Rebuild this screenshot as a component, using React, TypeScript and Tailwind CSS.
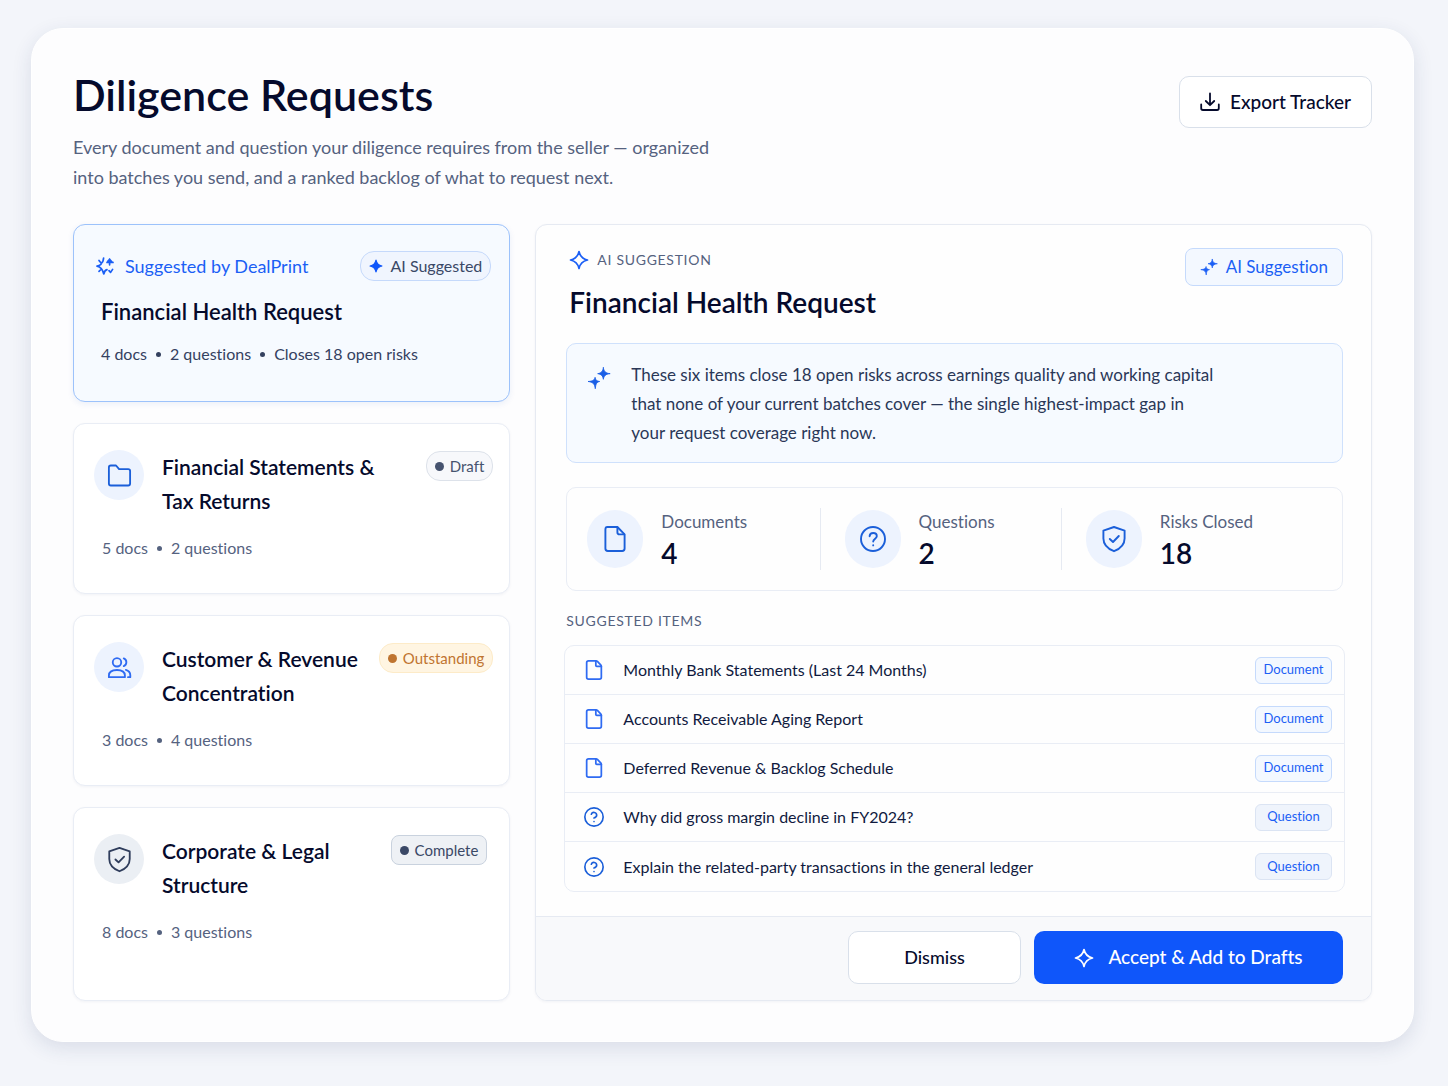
import React, { useState } from 'react';
import { CircleQuestionMark, File } from 'lucide-react';

type BatchStatus = 'draft' | 'outstanding' | 'complete';

interface Batch {
  id: number;
  title: [string, string];
  status: BatchStatus;
  meta: string[];
}

interface SuggestedItem {
  id: number;
  title: string;
  kind: 'Document' | 'Question';
}

interface IconProps {
  className?: string;
}

const batches: Batch[] = [
  { id: 1, title: ['Financial Statements &', 'Tax Returns'], status: 'draft', meta: ['5 docs', '2 questions'] },
  { id: 2, title: ['Customer & Revenue', 'Concentration'], status: 'outstanding', meta: ['3 docs', '4 questions'] },
  { id: 3, title: ['Corporate & Legal', 'Structure'], status: 'complete', meta: ['8 docs', '3 questions'] },
];

const items: SuggestedItem[] = [
  { id: 1, title: 'Monthly Bank Statements (Last 24 Months)', kind: 'Document' },
  { id: 2, title: 'Accounts Receivable Aging Report', kind: 'Document' },
  { id: 3, title: 'Deferred Revenue & Backlog Schedule', kind: 'Document' },
  { id: 4, title: 'Why did gross margin decline in FY2024?', kind: 'Question' },
  { id: 5, title: 'Explain the related-party transactions in the general ledger', kind: 'Question' },
];

const Spark: React.FC<IconProps & { filled?: boolean }> = ({ className, filled }) => (
  <svg viewBox="0 0 20 20" className={className} fill={filled ? 'currentColor' : 'none'} stroke="currentColor" strokeWidth="1.7" strokeLinejoin="round" aria-hidden="true">
    <path d="M10 1.5C11 6.2 13.8 9 18.5 10C13.8 11 11 13.8 10 18.5C9 13.8 6.2 11 1.5 10C6.2 9 9 6.2 10 1.5Z" />
  </svg>
);

const Sparkles: React.FC<IconProps> = ({ className }) => (
  <svg viewBox="0 0 22 22" className={className} fill="currentColor" stroke="currentColor" strokeWidth="0.8" strokeLinejoin="round" aria-hidden="true">
    <path d="M15 1.2C15.3 5 17 6.7 21.2 7C17 7.4 15.4 9 15 12.2C14.7 9 13 7.4 9.8 7C13 6.6 14.7 5 15 1.2Z" />
    <path d="M7.4 10.4C7.6 12.8 9 14 11.6 14.2C9 14.6 8 16.4 7.6 20.8C7.1 16.4 5.4 14.7 1 14.2C5.4 14 7 12.8 7.4 10.4Z" />
  </svg>
);

const SparkBurst: React.FC<IconProps> = ({ className }) => (
  <svg viewBox="0 0 20 20" className={className} fill="none" stroke="currentColor" strokeWidth="1.7" strokeLinecap="round" strokeLinejoin="round" aria-hidden="true">
    <path d="M8.6 2C8.4 5 7.6 6.6 6 7.4M4 4.4L5.2 6M2 10.2C3.4 10 4.8 9.4 6 8.4M2 10.2C5.6 11 7.6 13 8.8 18M4 15.4L5.4 14M8.8 18C9.4 15 10.2 14 12 13.6M14 14.6L15.6 16.4L17.6 13.4" />
    <path d="M14.6 3V8.8M12.6 5.6L14.6 3.2L16.8 5.8M12 6.4H18" />
  </svg>
);

const DownloadTray: React.FC<IconProps> = ({ className }) => (
  <svg viewBox="0 0 20 20" className={className} fill="none" stroke="currentColor" strokeWidth="1.8" strokeLinecap="round" strokeLinejoin="round" aria-hidden="true">
    <path d="M10 1.5V13M5.8 9L10 13.2L14.2 9M1.2 12.5V16.3Q1.2 18 2.9 18H17.1Q18.8 18 18.8 16.3V12.5" />
  </svg>
);

const Folder: React.FC<IconProps> = ({ className }) => (
  <svg viewBox="0 0 28 28" className={className} fill="none" stroke="currentColor" strokeWidth="1.9" strokeLinecap="round" strokeLinejoin="round" aria-hidden="true">
    <path d="M3 5.6Q3 3.6 5 3.6H10.4L13.6 7.4H23Q25 7.4 25 9.4V22.4Q25 24.4 23 24.4H5Q3 24.4 3 22.4Z" />
  </svg>
);

const People: React.FC<IconProps> = ({ className }) => (
  <svg viewBox="0 0 28 28" className={className} fill="none" stroke="currentColor" strokeWidth="1.9" strokeLinecap="round" strokeLinejoin="round" aria-hidden="true">
    <circle cx="11.4" cy="8.6" r="4.4" />
    <path d="M3 24V22.4C3 18.6 6 16.6 11.4 16.6S19.6 18.6 19.6 22.4V24Z" />
    <path d="M18.4 4.6A4.3 4.3 0 0 1 18.4 12.6M20.6 16.4C23.6 17.2 25.2 19.2 25.2 22V24H22.8" />
  </svg>
);

const Shield: React.FC<IconProps> = ({ className }) => (
  <svg viewBox="0 0 28 28" className={className} fill="none" stroke="currentColor" strokeWidth="1.9" strokeLinecap="round" strokeLinejoin="round" aria-hidden="true">
    <path d="M14 2L24.6 5.6V13.4C24.6 20 20.4 23.6 14 26.2C7.6 23.6 3.4 20 3.4 13.4V5.6Z" />
    <path d="M9.8 14L13 17L18.8 11" />
  </svg>
);

const statusStyles = {
  draft: {
    label: 'Draft',
    badge: 'rounded-[14px] border-[#dde2ea] bg-[#f7f8fb] text-[#46536f]',
    dot: 'bg-[#46536f]',
    circle: 'bg-[#edf3fe] text-[#1b5fd9]',
    icon: Folder,
  },
  outstanding: {
    label: 'Outstanding',
    badge: 'rounded-[14px] border-[#fdebc8] bg-[#fff5e2] text-[#bf7430]',
    dot: 'bg-[#bf7430]',
    circle: 'bg-[#edf3fe] text-[#2f6bf2]',
    icon: People,
  },
  complete: {
    label: 'Complete',
    badge: 'mr-1.5 rounded-lg border-[#c9d2de] bg-[#eef1f5] text-[#3a4866]',
    dot: 'bg-[#3a4866]',
    circle: 'bg-[#ebeff4] text-[#2f3d5c]',
    icon: Shield,
  },
};

const Meta: React.FC<{ parts: string[] }> = ({ parts }) => (
  <span className="flex items-center">
    {parts.map((part, index) => (
      <React.Fragment key={part}>
        {index > 0 && <span className="mx-[9px] size-[5px] rounded-full bg-current" />}
        <span>{part}</span>
      </React.Fragment>
    ))}
  </span>
);

const SuggestedCard: React.FC<{ selected: boolean; onSelect: () => void }> = ({ selected, onSelect }) => (
  <button
    type="button"
    aria-pressed={selected}
    onClick={onSelect}
    className="flex flex-col rounded-xl border border-[#9cc2fb] bg-[#f6faff] pt-[26px] pr-[18px] pb-[35px] pl-[21px] text-left shadow-[0_2px_6px_rgba(30,80,180,0.08)]"
  >
    <span className="flex w-full items-center justify-between">
      <span className="flex items-center gap-2.5 text-[18px] text-[#1b5ff5]">
        <SparkBurst className="size-5" />
        Suggested by DealPrint
      </span>
      <span className="flex h-[30px] items-center gap-2 rounded-[14px] border border-[#c5d9fb] bg-[#f0f5fe] px-2 text-base text-[#3a4866]">
        <Spark filled className="size-3.5 text-[#0f56fa]" />
        AI Suggested
      </span>
    </span>
    <span className="mt-[17px] pl-1.5 text-[22px] leading-7 font-semibold text-[#050a2c]">Financial Health Request</span>
    <span className="mt-4 pl-1.5 text-base leading-6 text-[#34415f]">
      <Meta parts={['4 docs', '2 questions', 'Closes 18 open risks']} />
    </span>
  </button>
);

const BatchCard: React.FC<{ batch: Batch }> = ({ batch }) => {
  const style = statusStyles[batch.status];
  const Icon = style.icon;

  return (
    <button
      type="button"
      className="flex flex-col rounded-xl border border-[#e9edf5] bg-white pt-[26px] pr-4 pb-[33px] pl-5 text-left shadow-[0_1px_3px_rgba(20,40,90,0.05)] last:grow"
    >
      <span className="flex w-full items-start">
        <span className={`flex size-[50px] shrink-0 items-center justify-center rounded-full ${style.circle}`}>
          <Icon className="size-[27px]" />
        </span>
        <span className="ml-[18px] grow text-[21px] leading-[34px] font-semibold whitespace-nowrap text-[#050a2c]">
          {batch.title[0]}
          <br />
          {batch.title[1]}
        </span>
        <span className={`mt-px flex h-[30px] items-center gap-1.5 border px-2 text-[15px] ${style.badge}`}>
          <span className={`size-[9px] rounded-full ${style.dot}`} />
          {style.label}
        </span>
      </span>
      <span className="mt-[18px] pl-2 text-base leading-6 text-[#55627f]">
        <Meta parts={batch.meta} />
      </span>
    </button>
  );
};

const Stat: React.FC<{ icon: React.ElementType; label: string; value: number }> = ({ icon: Icon, label, value }) => (
  <div className="flex items-center gap-[18px] border-l border-[#e6eaf2] pl-6 first:border-l-0 first:pl-5">
    <div className="flex h-[58px] w-14 shrink-0 items-center justify-center rounded-full bg-[#edf3fe] text-[#1b5fd9]">
      <Icon className="size-7" />
    </div>
    <div>
      <p className="text-[17px] leading-7 text-[#55627f]">{label}</p>
      <p className="text-[28px] leading-[34px] font-semibold text-[#050a2c]">{value}</p>
    </div>
  </div>
);

const DocumentIcon: React.FC<IconProps> = ({ className }) => (
  <svg viewBox="0 0 28 28" className={className} fill="none" stroke="currentColor" strokeWidth="1.9" strokeLinecap="round" strokeLinejoin="round" aria-hidden="true">
    <path d="M6.4 2H16.4L23.6 9.4V23.6Q23.6 26 21.2 26H6.8Q4.4 26 4.4 23.6V4.4Q4.4 2 6.4 2Z" />
    <path d="M16.4 2.4V7.2Q16.4 9.4 18.6 9.4H23.2" />
  </svg>
);

const QuestionIcon: React.FC<IconProps> = ({ className }) => (
  <svg viewBox="0 0 28 28" className={className} fill="none" stroke="currentColor" strokeWidth="1.9" strokeLinecap="round" strokeLinejoin="round" aria-hidden="true">
    <circle cx="14" cy="14" r="12" />
    <path d="M10.6 11.2C10.8 9.2 12.2 8 14.2 8C16.2 8 17.8 9.2 17.8 11.2C17.8 13.6 14.2 13.8 14.2 16.6M14.2 20.2V20.4" />
  </svg>
);

const App: React.FC = () => {
  const [selected, setSelected] = useState(true);

  return (
    <div className="min-h-screen bg-[#f3f5fa] pt-7 pr-[34px] pb-11 pl-[31px] font-['Lato','Liberation_Sans',sans-serif] text-[#050a2c] [font-variant-ligatures:none]">
      <main className="rounded-[32px] border border-white bg-[#fdfdfe] px-[41px] pt-11 pb-10 shadow-[0_6px_20px_rgba(30,50,100,0.12)]">
        <header className="flex items-start justify-between">
          <div>
            <h1 className="text-[43px] leading-[44px] font-semibold">Diligence Requests</h1>
            <p className="mt-[15px] text-[18px] leading-[30px] text-[#55627f]">
              Every document and question your diligence requires from the seller — organized
              <br />
              into batches you send, and a ranked backlog of what to request next.
            </p>
          </div>
          <button type="button" className="mt-[3px] flex h-[52px] items-center gap-2.5 rounded-[10px] border border-[#d9e0ea] bg-white px-5 text-[19px] font-medium">
            <DownloadTray className="size-5" />
            Export Tracker
          </button>
        </header>

        <div className="mt-8 grid grid-cols-[minmax(0,437fr)_minmax(0,836fr)] gap-[25px]">
          <nav aria-label="Request batches" className="flex flex-col gap-[21px]">
            <SuggestedCard selected={selected} onSelect={() => setSelected(true)} />
            {batches.map(batch => (
              <BatchCard key={batch.id} batch={batch} />
            ))}
          </nav>

          <section className="overflow-hidden rounded-xl border border-[#e6eaf2] bg-[#fefefe] shadow-[0_1px_3px_rgba(20,40,90,0.05)]">
            <div className="pt-[23px] pr-7 pb-6 pl-[30px]">
              <div className="flex items-start justify-between">
                <div className="pl-[3px]">
                  <p className="flex items-center gap-2 text-[14px] leading-6 tracking-wider text-[#55627f]">
                    <Spark className="size-5 text-[#1b5ff5]" />
                    AI SUGGESTION
                  </p>
                  <h2 className="mt-3 text-[28px] leading-9 font-semibold">Financial Health Request</h2>
                </div>
                <span className="flex h-[38px] items-center gap-2 rounded-lg border border-[#c5dafc] bg-[#f3f8ff] px-3.5 text-[17px] text-[#1b5ff5]">
                  <Sparkles className="size-[18px]" />
                  AI Suggestion
                </span>
              </div>

              <div className="mt-[23px] flex gap-5 rounded-[10px] border border-[#cfe1fc] bg-[#f6faff] px-5 pt-4 pb-[15px]">
                <Sparkles className="mt-1.5 size-6 shrink-0 text-[#1b5fe6]" />
                <p className="text-[17px] leading-[29px] text-[#2a3757]">
                  These six items close 18 open risks across earnings quality and working capital
                  <br />
                  that none of your current batches cover — the single highest-impact gap in
                  <br />
                  your request coverage right now.
                </p>
              </div>

              <div className="mt-6 grid grid-cols-[253fr_242fr_282fr] rounded-[10px] border border-[#e9edf5] py-5">
                <Stat icon={DocumentIcon} label="Documents" value={4} />
                <Stat icon={QuestionIcon} label="Questions" value={2} />
                <Stat icon={Shield} label="Risks Closed" value={18} />
              </div>

              <h3 className="mt-[18px] text-[14px] leading-6 tracking-wider text-[#55627f]">SUGGESTED ITEMS</h3>
              <ul className="-mx-0.5 mt-3 divide-y divide-[#e9edf5] rounded-[10px] border border-[#e9edf5]">
                {items.map(item => (
                  <li key={item.id} className="flex h-[49px] items-center pr-3 pl-[18px] text-base text-[#101a3e]">
                    {item.kind === 'Document' ? (
                      <File className="size-[22px] text-[#2f6bf2]" strokeWidth={1.9} />
                    ) : (
                      <CircleQuestionMark className="size-[22px] text-[#1b5fd9]" strokeWidth={1.8} />
                    )}
                    <span className="ml-[18px] grow">{item.title}</span>
                    <span
                      className={`flex h-[27px] w-[77px] items-center justify-center rounded-md border text-[13px] text-[#1b5ff5] ${
                        item.kind === 'Document' ? 'border-[#c5dafc] bg-[#f3f8ff]' : 'border-[#dbe4f3] bg-[#eff4fc]'
                      }`}
                    >
                      {item.kind}
                    </span>
                  </li>
                ))}
              </ul>
            </div>

            <footer className="flex justify-end gap-[13px] border-t border-[#e6eaf2] bg-[#f8f9fb] pt-3.5 pr-7 pb-4 font-medium">
              <button type="button" onClick={() => setSelected(false)} className="h-[53px] w-[173px] rounded-[10px] border border-[#d9e0ea] bg-white text-[18px]">
                Dismiss
              </button>
              <button type="button" className="flex h-[53px] w-[309px] items-center justify-center gap-3.5 rounded-[10px] bg-[#0f56fa] text-[19px] text-white">
                <Spark className="size-5" />
                Accept &amp; Add to Drafts
              </button>
            </footer>
          </section>
        </div>
      </main>
    </div>
  );
};

export default App;
